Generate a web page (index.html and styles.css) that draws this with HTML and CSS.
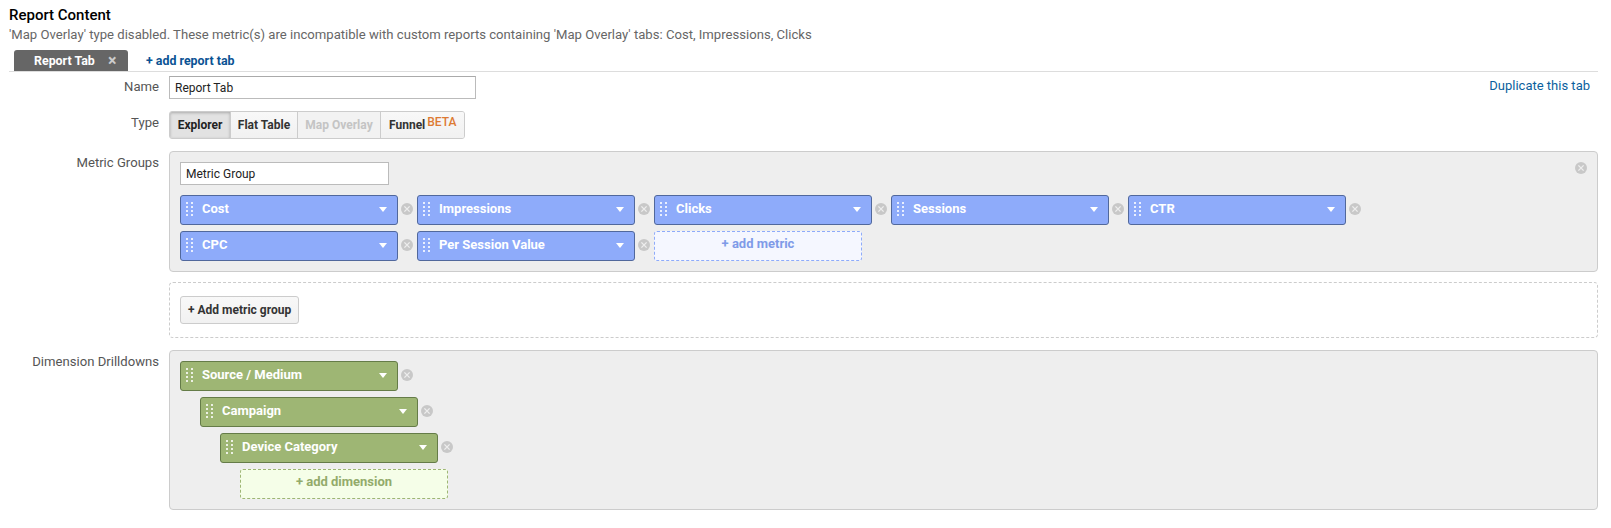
FILE: index.html
```html
<!DOCTYPE html>
<html lang="en">
<head>
<meta charset="utf-8">
<title>Report Content</title>
<link rel="stylesheet" href="styles.css">
</head>
<body>
<svg class="defs" width="0" height="0" aria-hidden="true">
  <symbol id="rm" viewBox="0 0 12 12">
    <circle cx="6" cy="6" r="6" fill="#c8c8c8"/>
    <path d="M3.4 3.4l5.2 5.2M8.6 3.4l-5.2 5.2" stroke="#eeeeee" stroke-width="1.3" fill="none"/>
  </symbol>
  <symbol id="grip" viewBox="0 0 8 14">
    <path d="M0 0h2v2H0zM5 0h2v2H5zM0 4h2v2H0zM5 4h2v2H5zM0 8h2v2H0zM5 8h2v2H5zM0 12h2v2H0zM5 12h2v2H5z" fill="currentColor"/>
  </symbol>
</svg>
<header class="head">
  <h1 class="title">Report Content</h1>
  <p class="note">'Map Overlay' type disabled. These metric(s) are incompatible with custom reports containing 'Map Overlay' tabs: Cost, Impressions, Clicks</p>
</header>
<nav class="tabs">
  <div class="tab"><span class="tab-name">Report Tab</span><span class="tab-x">×</span></div>
  <a class="add-tab">+ add report tab</a>
</nav>
<main class="form">
  <div class="row row-name">
    <label class="lbl">Name</label>
    <div class="fld name-fld">
      <div class="input name-input">Report Tab</div>
      <a class="dup">Duplicate this tab</a>
    </div>
  </div>
  <div class="row row-type">
    <label class="lbl lbl-panel">Type</label>
    <div class="fld">
      <div class="seg">
        <span class="seg-b seg-on">Explorer</span>
        <span class="seg-b seg-flat">Flat Table</span>
        <span class="seg-b seg-off">Map Overlay</span>
        <span class="seg-b seg-last">Funnel<sup class="beta">BETA</sup></span>
      </div>
    </div>
  </div>
  <div class="row row-metrics">
    <label class="lbl lbl-panel">Metric Groups</label>
    <div class="fld">
      <section class="panel metric-panel">
        <svg class="rm panel-rm"><use href="#rm"/></svg>
        <div class="input group-input">Metric Group</div>
        <div class="chips">
          <div class="item"><div class="chip blue"><svg class="grip"><use href="#grip"/></svg><span class="chip-t">Cost</span><i class="caret"></i></div><svg class="rm"><use href="#rm"/></svg></div>
          <div class="item"><div class="chip blue"><svg class="grip"><use href="#grip"/></svg><span class="chip-t">Impressions</span><i class="caret"></i></div><svg class="rm"><use href="#rm"/></svg></div>
          <div class="item"><div class="chip blue"><svg class="grip"><use href="#grip"/></svg><span class="chip-t">Clicks</span><i class="caret"></i></div><svg class="rm"><use href="#rm"/></svg></div>
          <div class="item"><div class="chip blue"><svg class="grip"><use href="#grip"/></svg><span class="chip-t">Sessions</span><i class="caret"></i></div><svg class="rm"><use href="#rm"/></svg></div>
          <div class="item"><div class="chip blue"><svg class="grip"><use href="#grip"/></svg><span class="chip-t">CTR</span><i class="caret"></i></div><svg class="rm"><use href="#rm"/></svg></div>
          <div class="item"><div class="chip blue"><svg class="grip"><use href="#grip"/></svg><span class="chip-t">CPC</span><i class="caret"></i></div><svg class="rm"><use href="#rm"/></svg></div>
          <div class="item"><div class="chip blue"><svg class="grip"><use href="#grip"/></svg><span class="chip-t">Per Session Value</span><i class="caret"></i></div><svg class="rm"><use href="#rm"/></svg></div>
          <div class="item"><div class="add add-blue">+ add metric</div></div>
        </div>
      </section>
      <section class="add-group"><span class="btn">+ Add metric group</span></section>
    </div>
  </div>
  <div class="row row-dims">
    <label class="lbl lbl-panel">Dimension Drilldowns</label>
    <div class="fld">
      <section class="panel dim-panel">
        <div class="item"><div class="chip green"><svg class="grip"><use href="#grip"/></svg><span class="chip-t">Source / Medium</span><i class="caret"></i></div><svg class="rm"><use href="#rm"/></svg></div>
        <div class="item lvl1"><div class="chip green"><svg class="grip"><use href="#grip"/></svg><span class="chip-t">Campaign</span><i class="caret"></i></div><svg class="rm"><use href="#rm"/></svg></div>
        <div class="item lvl2"><div class="chip green"><svg class="grip"><use href="#grip"/></svg><span class="chip-t">Device Category</span><i class="caret"></i></div><svg class="rm"><use href="#rm"/></svg></div>
        <div class="item lvl3"><div class="add add-green">+ add dimension</div></div>
      </section>
    </div>
  </div>
</main>
</body>
</html>
```
FILE: styles.css
```css
* { box-sizing: border-box; }
html, body { margin: 0; padding: 0; }
body {
  width: 1611px;
  height: 528px;
  overflow: hidden;
  background: #fff;
  font-family: Roboto, "Liberation Sans", sans-serif;
  font-size: 13.12px;
  color: #333;
}
.defs { display: block; height: 0; }
.head { padding: 6px 0 0 9px; height: 50px; }
.title { margin: 0; font-size: 15px; font-weight: 500; line-height: 19px; color: #000; }
.note { margin: 2px 0 0; font-size: 13.12px; line-height: 16px; color: #666; }
.tabs {
  display: flex;
  align-items: flex-end;
  height: 22px;
  margin: 0 13px 0 9px;
  padding-left: 5px;
  border-bottom: 1px solid #ddd;
}
.tab {
  display: flex;
  align-items: center;
  width: 114px;
  height: 21px;
  padding-left: 20px;
  background: #666;
  border-radius: 3px 3px 0 0;
  color: #fff;
  font-weight: 700;
  font-size: 12.4px;
}
.tab-name { width: 74px; }
.tab-x { font-size: 16px; line-height: 16px; color: #ccc; font-weight: 700; }
.add-tab {
  margin-left: 18px;
  align-self: center;
  font-weight: 700;
  font-size: 12.4px;
  color: #0b5394;
}
.row { display: flex; }
.lbl {
  flex: none;
  width: 159px;
  text-align: right;
  color: #555;
  line-height: 16px;
}
.fld { flex: none; width: 1429px; margin-left: 10px; }
.row-name { margin-top: 4px; height: 35px; }
.row-name .lbl { padding-top: 3px; }
.name-fld { display: flex; justify-content: space-between; padding-right: 8px; }
.input {
  height: 23px;
  padding: 0 5px;
  background: #fff;
  border: 1px solid #bbb;
  border-top-color: #aaa;
  color: #222;
  font-size: 12px;
  line-height: 22px;
}
.name-input { width: 307px; }
.dup { color: #0b5f9e; font-size: 13px; line-height: 16px; padding-top: 2px; }
.row-type { height: 40px; }
.seg {
  display: inline-flex;
  height: 28px;
  border: 1px solid #ccc;
  border-radius: 3px;
  background: #f5f5f5;
  overflow: hidden;
  font-size: 12px;
  font-weight: 700;
}
.seg-b {
  display: flex;
  align-items: center;
  justify-content: center;
  flex: none;
  padding: 0;
  white-space: nowrap;
  border-right: 1px solid #ccc;
  color: #333;
  background: linear-gradient(#f8f8f8, #f1f1f1);
}
.seg-on { width: 61px; background: #e2e2e2; box-shadow: inset 0 1px 3px #aaa; color: #222; }
.seg-flat { width: 67px; }
.seg-off { width: 83px; color: #c4c4c4; background: #f2f2f2; }
.seg-last { width: 83px; justify-content: flex-start; padding-left: 8px; border-right: 0; }
.beta {
  font-size: 12px;
  font-weight: 500;
  color: #dd7a33;
  line-height: 1;
  margin: -7px 0 0 2px;
}
.lbl-panel { padding-top: 4px; }
.row-metrics { height: 199px; }
.panel {
  position: relative;
  width: 1429px;
  background: #eee;
  border: 1px solid #ccc;
  border-radius: 4px;
}
.metric-panel { height: 121px; padding: 10px 10px 0; }
.panel-rm { position: absolute; top: 10px; right: 10px; }
.group-input { width: 209px; border-color: #bbb; }
.chips { display: flex; flex-wrap: wrap; gap: 6px 0; margin-top: 10px; }
.item { display: flex; align-items: center; width: 237px; height: 30px; }
.chip {
  position: relative;
  flex: none;
  display: flex;
  align-items: center;
  width: 218px;
  height: 30px;
  border-radius: 3px;
  border: 1px solid;
  color: #fff;
  font-size: 13px;
  font-weight: 700;
}
.blue { background: #8eabfa; border-color: #51689c; }
.green { background: #9eb674; border-color: #657c48; }
.grip { flex: none; width: 8px; height: 14px; margin: 0 0 3px 5px; color: rgba(255, 255, 255, .8); }
.chip-t { margin-left: 8px; padding-bottom: 4px; }
.caret {
  position: absolute;
  right: 10px;
  top: 11px;
  width: 0;
  height: 0;
  border-style: solid;
  border-width: 5px 4.5px 0;
  border-color: #fff transparent transparent;
}
.rm { flex: none; width: 12px; height: 12px; margin: 0 0 2px 3px; }
.panel-rm { margin: 0; }
.add {
  display: flex;
  justify-content: center;
  align-items: center;
  width: 208px;
  height: 30px;
  border: 1px dashed;
  border-radius: 3px;
  font-size: 13px;
  font-weight: 700;
  padding-bottom: 5px;
}
.add-blue { background: #f5f7ff; border-color: #8eabfa; color: #7f9be8; }
.add-green { background: #f5fee8; border-color: #9eb674; color: #93ab6b; }
.add-group {
  width: 1429px;
  height: 56px;
  margin-top: 10px;
  padding: 13px 10px 0;
  border: 1px dashed #ccc;
  border-radius: 4px;
}
.btn {
  display: inline-flex;
  align-items: center;
  height: 28px;
  padding: 0 7px;
  border: 1px solid #ccc;
  border-radius: 3px;
  background: linear-gradient(#f8f8f8, #f1f1f1);
  color: #333;
  font-size: 12px;
  font-weight: 700;
}
.row-dims { height: 160px; }
.dim-panel { height: 160px; padding: 10px 10px 0; display: flex; flex-direction: column; gap: 6px; }
.lvl1 { margin-left: 20px; }
.lvl2 { margin-left: 40px; }
.lvl3 { margin-left: 60px; }
```
